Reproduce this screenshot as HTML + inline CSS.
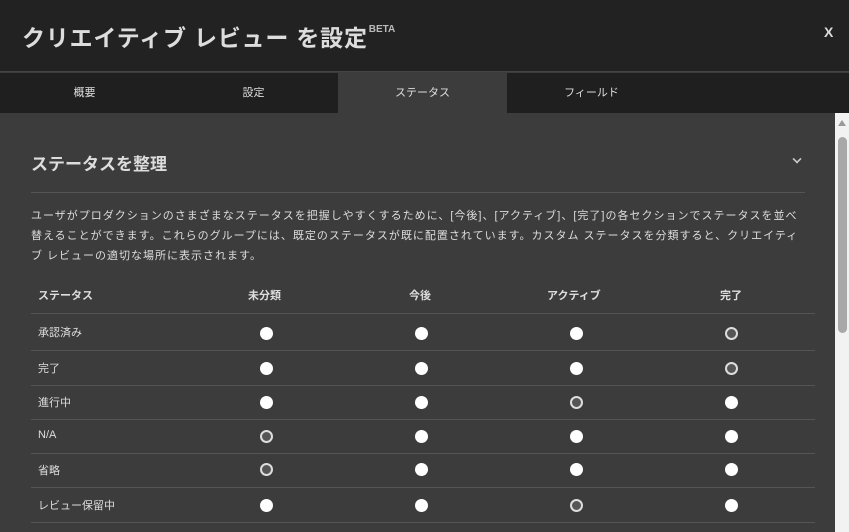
<!DOCTYPE html>
<html><head><meta charset="utf-8"><style>
*{margin:0;padding:0;box-sizing:border-box}
body{width:849px;height:532px;overflow:hidden;background:#3c3c3c;font-family:"Liberation Sans","Noto Sans CJK JP",sans-serif;color:#e0e0e0;position:relative}
.hdr{position:absolute;left:0;top:0;width:849px;height:72px;background:#222;border-bottom:1px solid #444}
.hdr h1{position:absolute;left:22px;top:19px;font-size:23px;font-weight:bold;color:#ddd;letter-spacing:0.8px}
.hdr h1 sup{font-size:10px;color:#bbb;vertical-align:top;position:relative;top:5px;margin-left:1px;letter-spacing:0}
.x{position:absolute;left:824px;top:24px;font-size:14px;font-weight:bold;color:#ddd}
.tabs{position:absolute;left:0;top:73px;width:849px;height:40px;background:#1f1f1f}
.tab{position:absolute;top:0;height:40px;line-height:40px;text-align:center;font-size:11px;color:#ddd;width:169px}
.tab.on{background:#3c3c3c}
h2{position:absolute;left:31px;top:150px;font-size:17px;font-weight:bold;color:#ddd}
.chev{position:absolute;left:793px;top:155px;width:8px;height:8px;border-right:2px solid #ccc;border-bottom:2px solid #ccc;transform:rotate(45deg) scale(.8)}
.hr{position:absolute;left:31px;width:774px;height:1px;background:#555}
.desc{position:absolute;left:31px;top:206px;width:772px;font-size:11px;line-height:20px;color:#ddd;letter-spacing:1px}
.th{position:absolute;top:287px;font-size:11px;font-weight:bold;color:#ddd}
.rl{position:absolute;left:38px;font-size:11px;color:#ddd}
.tl{position:absolute;left:31px;width:784px;height:1px;background:#555}
.r{position:absolute;width:13px;height:13px;border-radius:50%;background:#fff}
.r.c{background:#555;border:2px solid #ddd}
.sb{position:absolute;left:835px;top:113px;width:14px;height:419px;background:#f2f2f2}
.th2{position:absolute;left:838px;top:137px;width:9px;height:196px;border-radius:5px;background:#a8a8a8}
.up{position:absolute;left:838px;top:120px;width:0;height:0;border-left:4px solid transparent;border-right:4px solid transparent;border-bottom:6px solid #999}
</style></head><body>
<div class="hdr"><h1>クリエイティブ レビュー を設定<sup>BETA</sup></h1><div class="x">X</div></div>
<div class="tabs">
<div class="tab" style="left:0">概要</div>
<div class="tab" style="left:169px">設定</div>
<div class="tab on" style="left:338px">ステータス</div>
<div class="tab" style="left:507px">フィールド</div>
</div>
<h2>ステータスを整理</h2><div class="chev"></div>
<div class="hr" style="top:192px"></div>
<div class="desc">ユーザがプロダクションのさまざまなステータスを把握しやすくするために、[今後]、[アクティブ]、[完了]の各セクションでステータスを並べ替えることができます。これらのグループには、既定のステータスが既に配置されています。カスタム ステータスを分類すると、クリエイティブ レビューの適切な場所に表示されます。</div>
<div class="th" style="left:38px">ステータス</div>
<div class="th" style="left:248px">未分類</div>
<div class="th" style="left:409px">今後</div>
<div class="th" style="left:547px">アクティブ</div>
<div class="th" style="left:720px">完了</div>
<div class="tl" style="top:313px"></div>
<div class="rl" style="top:324px">承認済み</div><div class="tl" style="top:350px"></div>
<div class="rl" style="top:360px">完了</div><div class="tl" style="top:385px"></div>
<div class="rl" style="top:394px">進行中</div><div class="tl" style="top:419px"></div>
<div class="rl" style="top:429px">N/A</div><div class="tl" style="top:453px"></div>
<div class="rl" style="top:462px">省略</div><div class="tl" style="top:487px"></div>
<div class="rl" style="top:497px">レビュー保留中</div><div class="tl" style="top:522px"></div>

<div class="r" style="left:260px;top:327px"></div><div class="r" style="left:415px;top:327px"></div><div class="r" style="left:570px;top:327px"></div><div class="r c" style="left:725px;top:327px"></div>
<div class="r" style="left:260px;top:362px"></div><div class="r" style="left:415px;top:362px"></div><div class="r" style="left:570px;top:362px"></div><div class="r c" style="left:725px;top:362px"></div>
<div class="r" style="left:260px;top:396px"></div><div class="r" style="left:415px;top:396px"></div><div class="r c" style="left:570px;top:396px"></div><div class="r" style="left:725px;top:396px"></div>
<div class="r c" style="left:260px;top:430px"></div><div class="r" style="left:415px;top:430px"></div><div class="r" style="left:570px;top:430px"></div><div class="r" style="left:725px;top:430px"></div>
<div class="r c" style="left:260px;top:463px"></div><div class="r" style="left:415px;top:463px"></div><div class="r" style="left:570px;top:463px"></div><div class="r" style="left:725px;top:463px"></div>
<div class="r" style="left:260px;top:499px"></div><div class="r" style="left:415px;top:499px"></div><div class="r c" style="left:570px;top:499px"></div><div class="r" style="left:725px;top:499px"></div>

<div class="sb"></div><div class="up"></div><div class="th2"></div>
</body></html>
